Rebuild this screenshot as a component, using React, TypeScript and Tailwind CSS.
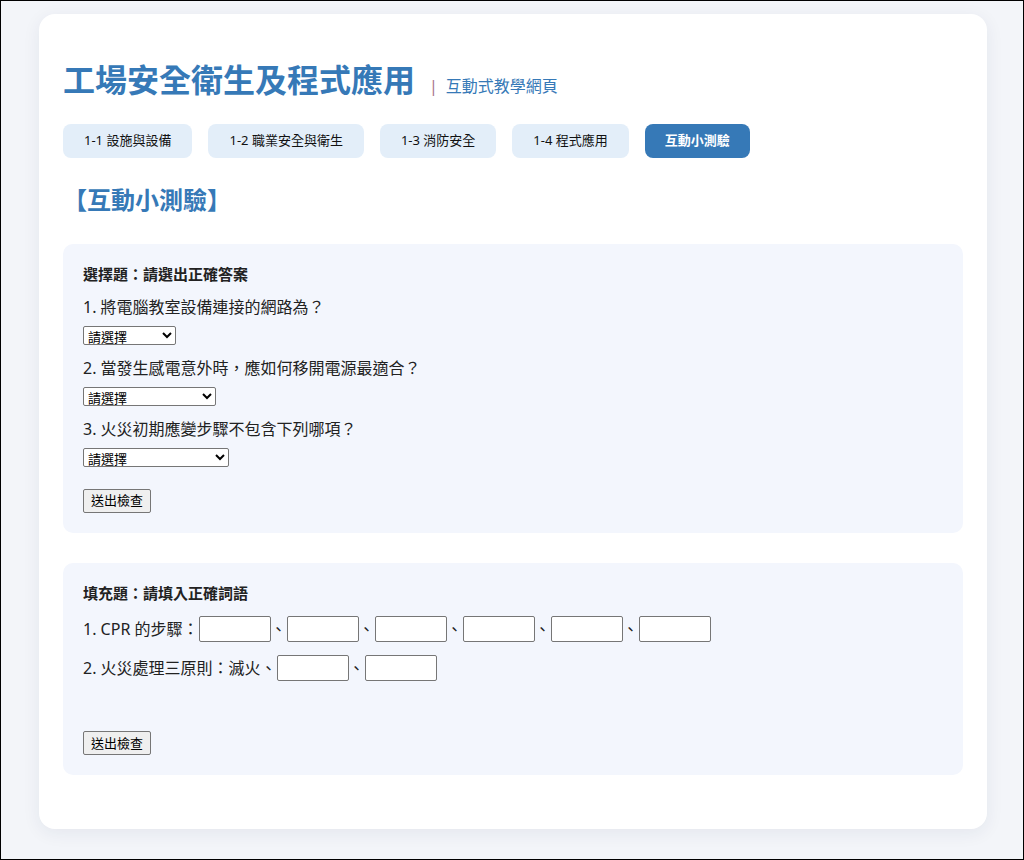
import { useState } from 'react';

const tabs = ['1-1 設施與設備', '1-2 職業安全與衛生', '1-3 消防安全', '1-4 程式應用', '互動小測驗'];

const questions = [
  { q: '1. 將電腦教室設備連接的網路為？', w: 'w-[93px]', opts: ['區域網路', '廣域網路', '網際網路'] },
  { q: '2. 當發生感電意外時，應如何移開電源最適合？', w: 'w-[133px]', opts: ['用手直接拉開', '用乾燥木棍撥開', '用金屬棒撥開'] },
  { q: '3. 火災初期應變步驟不包含下列哪項？', w: 'w-[146px]', opts: ['大聲呼救', '通報消防單位', '搭乘電梯逃生'] },
];

const Blank = () => (
  <input
    type="text"
    className="w-[72px] h-[26px] bg-white border border-[#767676] rounded-[2px] px-1 text-[13px] outline-none"
  />
);

const SubmitButton = ({ onClick }: { onClick?: () => void }) => (
  <button
    onClick={onClick}
    className="h-[24px] px-[7px] bg-[#efefef] border border-[#767676] rounded-[2px] text-[13px] leading-none text-black"
  >
    送出檢查
  </button>
);

export default function App() {
  const [active, setActive] = useState(4);

  return (
    <div
      className="h-[860px] box-border border border-black bg-[#f3f5f9] pt-[13px] pl-[2px] overflow-hidden"
      style={{ fontFamily: '"Noto Sans", "Noto Sans CJK TC", sans-serif' }}
    >
      <div className="w-[948px] mx-auto bg-white rounded-2xl shadow-[0_4px_18px_rgba(30,40,80,0.07)] px-6 pt-[45px] pb-[54px] text-[#222]">
        {/* Header */}
        <div className="flex items-baseline">
          <h1 className="text-[32px] leading-[42px] font-bold text-[#3679b7]">工場安全衛生及程式應用</h1>
          <span className="ml-[14px] text-[16px] text-[#a8738a]">|</span>
          <span className="ml-[8px] text-[16px] text-[#3679b7]">互動式教學網頁</span>
        </div>

        {/* Tabs */}
        <nav className="flex gap-4 mt-[23px]">
          {tabs.map((t, i) => (
            <button
              key={t}
              onClick={() => setActive(i)}
              className={`h-[34px] rounded-lg text-[13px] ${
                i === active ? 'px-5 bg-[#3679b7] text-white font-semibold' : 'px-[21px] bg-[#e3eef9] text-[#111]'
              }`}
            >
              {t}
            </button>
          ))}
        </nav>

        <h2 className="mt-[26px] text-[24px] leading-[32px] font-bold text-[#3679b7]">【互動小測驗】</h2>

        {/* Multiple choice */}
        <section className="mt-[28px] bg-[#f3f6fd] rounded-[10px] p-5">
          <div className="text-[15px] leading-[20px] font-bold">選擇題：請選出正確答案</div>
          {questions.map((item) => (
            <div key={item.q} className="mt-[11px]">
              <div className="text-[16px] leading-[24px]">{item.q}</div>
              <select
                className={`${item.w} mt-[7px] h-[19px] block bg-white border border-[#767676] rounded-[2px] text-[13px] leading-none text-black`}
                defaultValue=""
              >
                <option value="">請選擇</option>
                {item.opts.map((o) => (
                  <option key={o}>{o}</option>
                ))}
              </select>
            </div>
          ))}
          <div className="mt-[20px]">
            <SubmitButton />
          </div>
        </section>

        {/* Fill in blanks */}
        <section className="mt-[30px] bg-[#f3f6fd] rounded-[10px] p-5">
          <div className="text-[15px] leading-[20px] font-bold">填充題：請填入正確詞語</div>
          <div className="mt-[13px] flex items-center text-[16px]">
            <span>1. CPR 的步驟：</span>
            <Blank />
            <span>、</span>
            <Blank />
            <span>、</span>
            <Blank />
            <span>、</span>
            <Blank />
            <span>、</span>
            <Blank />
            <span>、</span>
            <Blank />
          </div>
          <div className="mt-[13px] flex items-center text-[16px]">
            <span>2. 火災處理三原則：滅火、</span>
            <Blank />
            <span>、</span>
            <Blank />
          </div>
          <div className="mt-[49px]">
            <SubmitButton />
          </div>
        </section>
      </div>
    </div>
  );
}
